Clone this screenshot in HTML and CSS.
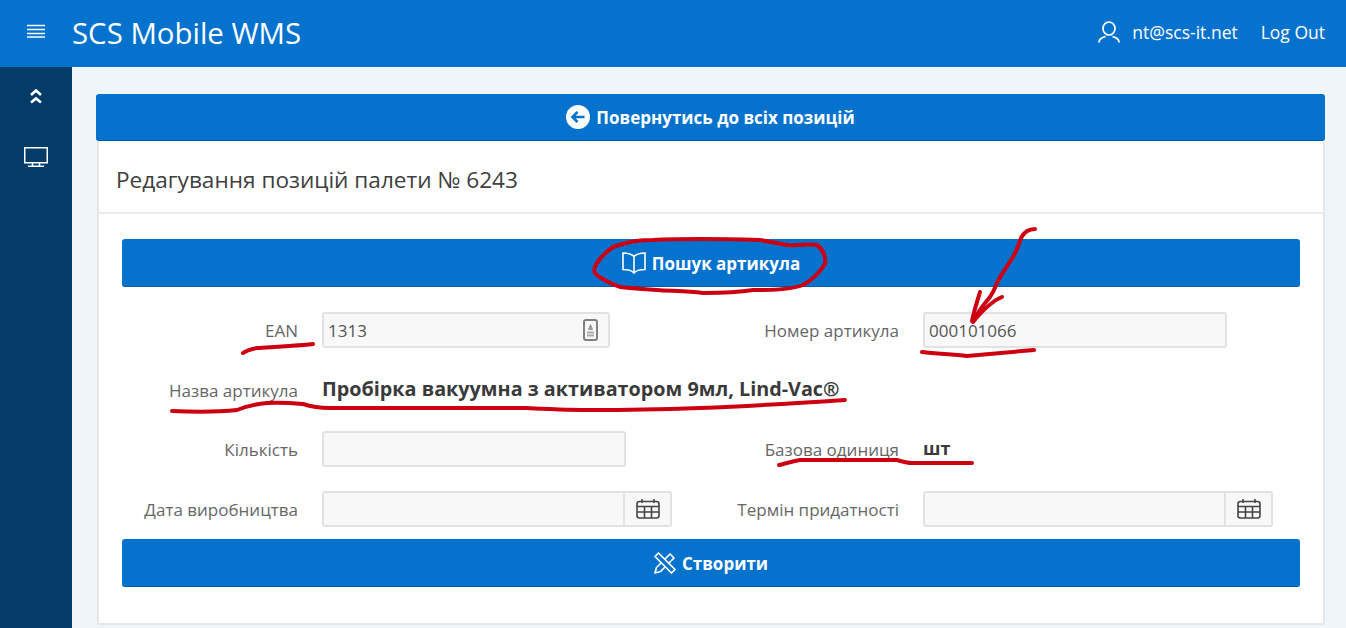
FILE: index.html
```html
<!DOCTYPE html>
<html lang="uk">
<head>
  <meta charset="UTF-8" />
  <title>SCS Mobile WMS</title>
  <link rel="stylesheet" href="styles.css">
</head>
<body>
  <header class="topbar">
    <svg class="nav-toggle" viewBox="0 0 18 14" width="18" height="14"><path d="M0 1.500h18M0 5.500h18M0 9.500h18M0 13h18" stroke="#fff" stroke-width="1.300" fill="none"/></svg>
    <div class="brand">SCS Mobile WMS</div>
    <div class="user">
      <svg viewBox="0 0 22 22" width="22" height="22" fill="none" stroke="#fff" stroke-width="1.700"><ellipse cx="11" cy="7.500" rx="6" ry="6.500"/><path d="M1 21.500c0-4 3-5 6.500-6M21 21.500c0-4-3-5-6.500-6"/></svg>
      <span class="user-name">nt@scs-it.net</span>
    </div>
    <a class="logout" href="#">Log Out</a>
  </header>

  <div class="layout">
    <nav class="sidebar">
      <svg viewBox="0 0 14 16" width="14" height="16" fill="none" stroke="#fff" stroke-width="2.600"><path d="M2 7l5-4.500L12 7M2 14.500l5-4 5 4"/></svg>
      <svg viewBox="0 0 24 20" width="24" height="20" fill="none" stroke="#fff" stroke-width="1.500"><rect x=".75" y=".75" width="22.500" height="15"/><path d="M4 19.250h16M8.500 16v3M15.500 16v3"/></svg>
    </nav>

    <main class="content">
      <button class="btn btn-back">
        <svg viewBox="0 0 24 24" width="24" height="24"><circle cx="12" cy="12" r="12" fill="#fff"/><path d="M18.500 12H7M11.500 7L6.500 12l5 5" fill="none" stroke="#0572ce" stroke-width="2.600"/></svg>
        Повернутись до всіх позицій
      </button>

      <section class="card">
        <h2 class="card-title">Редагування позицій палети № 6243</h2>
        <div class="card-body">
          <button class="btn">
            <svg viewBox="0 0 24 22" width="24" height="22" fill="none" stroke="#fff" stroke-width="1.600"><path d="M12 4.500C9.500 2 6 1 1 1v16.500c5 0 9 1 11 3.500 2-2.500 6-3.500 11-3.500V1c-5 0-8.500 1-11 3.500zM12 4.500V21"/></svg>
            Пошук артикула
          </button>

          <div class="form-grid">
            <label class="label">EAN</label>
            <div class="input input-ean">
              <span>1313</span>
              <svg viewBox="0 0 15 22" width="15" height="22" fill="none"><rect x="1" y="1" width="13" height="20" rx="2" stroke="#808080" stroke-width="2"/><path d="M7.500 5.500l2 5h-4z" fill="#999" stroke="#999"/><path d="M4 13.500h7M4 16.500h7" stroke="#aaa" stroke-width="2"/></svg>
            </div>
            <label class="label">Номер артикула</label>
            <div class="input input-wide"><span>000101066</span></div>

            <label class="label">Назва артикула</label>
            <div class="value value-name">Пробірка вакуумна з активатором 9мл, Lind-Vac®</div>

            <label class="label">Кількість</label>
            <div class="input input-wide"></div>
            <label class="label">Базова одиниця</label>
            <div class="value">шт</div>

            <label class="label">Дата виробництва</label>
            <div class="date-field">
              <div class="input"></div>
              <div class="date-btn">
                <svg viewBox="0 0 24 20" width="24" height="20" fill="none" stroke="#444" stroke-width="1.600"><rect x="1" y="2.500" width="22" height="16.500" rx="2.500"/><path d="M1 7.500h22M1 13h22M8.500 7.500V19M15.500 7.500V19M6 0v4M18 0v4"/></svg>
              </div>
            </div>
            <label class="label">Термін придатності</label>
            <div class="date-field">
              <div class="input"></div>
              <div class="date-btn">
                <svg viewBox="0 0 24 20" width="24" height="20" fill="none" stroke="#444" stroke-width="1.600"><rect x="1" y="2.500" width="22" height="16.500" rx="2.500"/><path d="M1 7.500h22M1 13h22M8.500 7.500V19M15.500 7.500V19M6 0v4M18 0v4"/></svg>
              </div>
            </div>
          </div>

          <button class="btn">
            <svg viewBox="0 0 22 22" width="22" height="22" fill="none" stroke="#fff" stroke-width="1.700" stroke-linejoin="round"><path d="M1 21l1.500-5.500L16 2l4 4L6.500 19.500z"/><path d="M4.500 1L1 4.500 17.500 21 21 17.500z" fill="#0572ce"/></svg>
            Створити
          </button>
        </div>
      </section>
    </main>
  </div>

  <!-- red marker drawn over the screenshot -->
  <svg class="marker" viewBox="0 0 1346 628" width="1346" height="628" fill="none" stroke="#cc0011" stroke-width="4" stroke-linecap="round" stroke-linejoin="round">
    <path d="M613 247C630 241 640 240 653 240C690 238 730 239 760 240L787 245C800 246 810 243 817 245C824 250 826 258 825 264C820 272 812 280 803 285C790 290 770 290 753 290C735 293 720 293 703 293C688 291 670 291 657 290C643 289 630 288 620 287C610 283 600 279 595 273C592 268 600 256 613 247Z"/>
    <path d="M1035 229C1028 229 1024 232 1021 238C1018 247 1016 252 1013 257C1006 268 1000 276 997 283C994 291 992 294 990 297C984 304 978 312 973 321"/>
    <path d="M980 292C977 302 974 311 972 321M1002 297C992 301 982 311 973 322"/>
    <path d="M922 352C938 354 952 354 967 356C990 354 1012 352 1034 350"/>
    <path d="M243 353C247 350 252 349 257 348C275 347 295 346 313 344"/>
    <path d="M172 411C195 412 218 412 237 410C247 406 256 404 267 403C280 402 292 403 303 404C312 407 320 408 330 408L527 408C550 409 572 410 593 410C630 410 670 409 700 408C750 406 800 403 845 400"/>
    <path d="M779 465C787 463 794 461 800 460L897 460C903 462 908 463 913 463L972 463"/>
  </svg>
</body>
</html>
```

FILE: styles.css
```css
* {
  box-sizing: border-box;
}
html, body {
  height: 100%;
}
body {
  font-family: "Open Sans", sans-serif;
  font-size: 17px;
  color: #404040;
  background: #f0f5f9;
  margin: 0;
  overflow: hidden;
  position: relative;
}
.topbar {
  height: 67px;
  background: #0572ce;
  color: #fff;
  display: flex;
  align-items: center;
  padding: 0 21px 0 27px;
}
.nav-toggle {
  margin-top: -5px;
}
.brand {
  font-size: 29.400px;
  margin-left: 27px;
  margin-top: -2px;
}
.user {
  margin-left: auto;
  display: flex;
  align-items: center;
  gap: 12px;
  margin-top: -4px;
  font-size: 17.500px;
}
.logout {
  color: #fff;
  text-decoration: none;
  margin-left: 23px;
  margin-top: -4px;
  font-size: 17.500px;
}
.layout {
  display: flex;
  height: 561px;
}
.sidebar {
  width: 72px;
  background: #033c69;
  display: flex;
  flex-direction: column;
  align-items: center;
  padding-top: 21px;
  gap: 43px;
}
.content {
  flex: 1;
  padding: 27px 21px 0 24px;
}
.btn {
  display: flex;
  align-items: center;
  justify-content: center;
  gap: 6px;
  width: 100%;
  height: 48px;
  background: #0572ce;
  color: #fff;
  border: 0;
  border-bottom: 1px solid #045ba5;
  border-radius: 3px;
  font-family: inherit;
  font-size: 17px;
  font-weight: 700;
}
.btn-back {
  height: 47px;
}
.card-body .btn {
  padding-top: 2px;
}
.card {
  background: #fff;
  border: 2px solid #e6e6e6;
  border-top: 0;
  border-radius: 2px;
  margin-left: 1px;
  height: 484px;
}
.card-title {
  font-size: 22.600px;
  font-weight: 400;
  margin: 0;
  height: 73px;
  line-height: 77px;
  padding-left: 17px;
  border-bottom: 2px solid #ebebeb;
  color: #404040;
}
.card-body {
  padding: 25px 23px 0 23px;
}
.form-grid {
  display: grid;
  grid-template-columns: 176px 1fr 176px 1fr;
  grid-template-rows: 36px 35px 36px 36px;
  column-gap: 24px;
  row-gap: 24px;
  margin: 25px 0 12px;
  align-items: start;
}
.label {
  text-align: right;
  color: #666;
  line-height: 37px;
}
.input {
  height: 36px;
  background: #f8f8f8;
  border: 2px solid #e2e2e2;
  border-radius: 3px;
  display: flex;
  align-items: center;
  justify-content: space-between;
  padding: 0 4px;
  color: #555;
  flex: 1;
}
.input-ean {
  width: 288px;
  padding-right: 10px;
}
.input-wide {
  width: 304px;
}
.value {
  font-weight: 700;
  font-size: 18px;
  color: #3a3a3a;
  line-height: 34px;
}
.value-name {
  grid-column: 2 / 5;
  font-size: 19.800px;
}
.date-field {
  display: flex;
  width: 350px;
}
.date-field .input {
  border-radius: 3px 0 0 3px;
}
.date-btn {
  width: 47px;
  height: 36px;
  background: #f8f8f8;
  border: 2px solid #e2e2e2;
  border-left: 0;
  border-radius: 0 3px 3px 0;
  display: flex;
  align-items: center;
  justify-content: center;
}
.marker {
  position: absolute;
  left: 0;
  top: 0;
  pointer-events: none;
}
```
